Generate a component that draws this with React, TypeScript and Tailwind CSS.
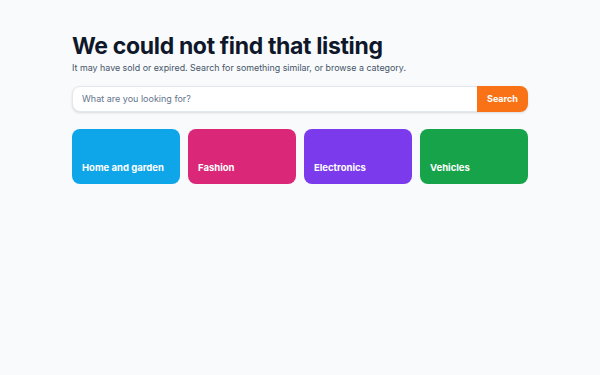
export default function App() {
  const categories = [
    { name: 'Home and garden', color: 'bg-[#0ea5e9]' },
    { name: 'Fashion', color: 'bg-[#db2777]' },
    { name: 'Electronics', color: 'bg-[#7c3aed]' },
    { name: 'Vehicles', color: 'bg-[#16a34a]' },
  ];

  return (
    <div className="min-h-[375px] bg-[#f8fafc] font-['Inter',sans-serif]">
      <div className="mx-auto w-[456px] pt-[32px]">
        <h1 className="text-[23px] font-bold leading-[28px] tracking-[-0.015em] text-[#0f172a]">
          We could not find that listing
        </h1>
        <p className="mt-[1px] text-[8.9px] leading-[14px] text-[#475569]">
          It may have sold or expired. Search for something similar, or browse a category.
        </p>

        <div className="mt-[11px] flex h-[26px] rounded-lg border border-[#e2e8f0] bg-white shadow-sm">
          <input
            className="min-w-0 flex-1 rounded-l-lg bg-transparent px-[9px] text-[9px] text-[#334155] placeholder:text-[#64748b] outline-none"
            placeholder="What are you looking for?"
          />
          <button className="-my-px -mr-px w-[51px] rounded-r-lg bg-[#f97316] text-[9px] font-bold text-white">
            Search
          </button>
        </div>

        <div className="mt-[17px] grid grid-cols-4 gap-2">
          {categories.map((c) => (
            <a
              key={c.name}
              href="#"
              className={`${c.color} flex h-[55px] items-end rounded-lg px-[10px] pb-[9px] text-[9.5px] font-bold text-white`}
            >
              {c.name}
            </a>
          ))}
        </div>
      </div>
    </div>
  );
}
